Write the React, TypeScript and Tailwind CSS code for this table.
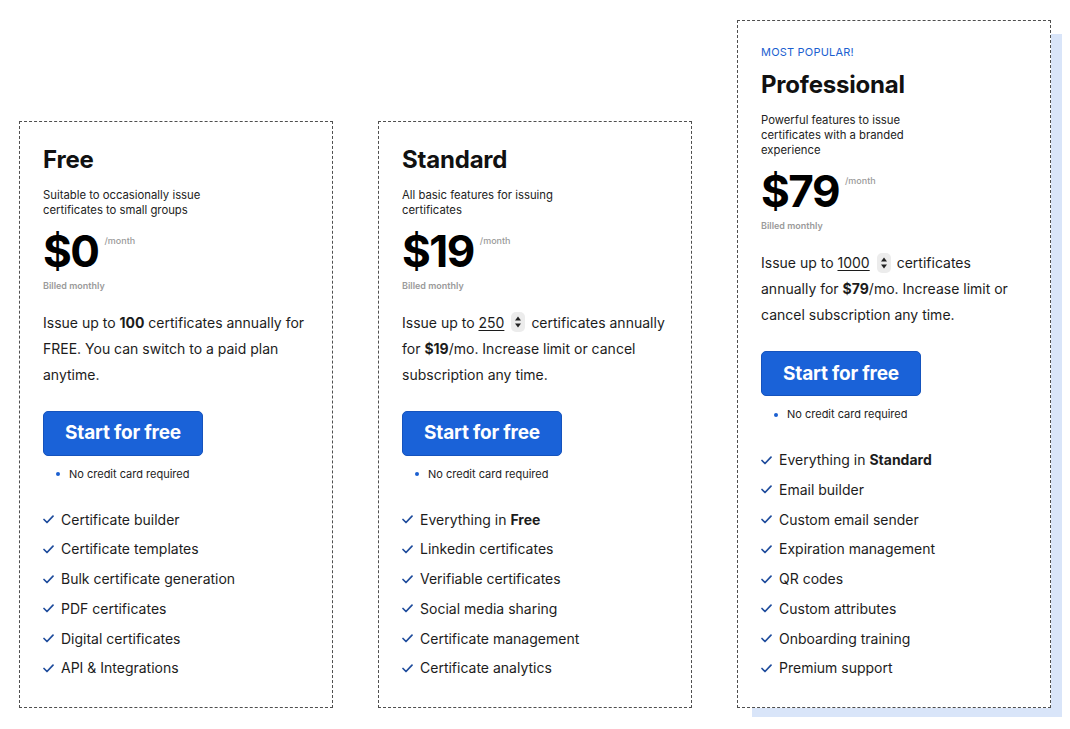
import React from 'react';

type Plan = {
  name: string;
  popular?: boolean;
  desc: string;
  price: string;
  body: React.ReactNode;
  features: React.ReactNode[];
};

function Stepper() {
  return (
    <span className="inline-flex items-center justify-center align-middle w-[14px] h-[20px] ml-[7px] mr-[6px] rounded-[5px] bg-[#ececec] -mt-[3px]">
      <svg width="8" height="14" viewBox="0 0 8 14">
        <path d="M4 1.5 L7 5.5 H1 Z" fill="#222" />
        <path d="M4 12.5 L7 8.5 H1 Z" fill="#222" />
      </svg>
    </span>
  );
}

function Check() {
  return (
    <svg width="11" height="9" viewBox="0 0 11 9" className="shrink-0">
      <path d="M1 4.5 L4 7.5 L10 1.2" fill="none" stroke="#1f4c9c" strokeWidth="1.7" strokeLinecap="round" strokeLinejoin="round" />
    </svg>
  );
}

const plans: Plan[] = [
  {
    name: 'Free',
    desc: 'Suitable to occasionally issue certificates to small groups',
    price: '$0',
    body: (
      <>
        Issue up to <b className="font-bold">100</b> certificates annually for FREE. You can switch to a paid plan anytime.
      </>
    ),
    features: [
      'Certificate builder',
      'Certificate templates',
      'Bulk certificate generation',
      'PDF certificates',
      'Digital certificates',
      'API & Integrations',
    ],
  },
  {
    name: 'Standard',
    desc: 'All basic features for issuing certificates',
    price: '$19',
    body: (
      <>
        Issue up to <span className="underline underline-offset-2">250</span>
        <Stepper />certificates annually for <b className="font-bold">$19</b>/mo. Increase limit or cancel subscription any time.
      </>
    ),
    features: [
      <>Everything in <b className="font-bold">Free</b></>,
      'Linkedin certificates',
      'Verifiable certificates',
      'Social media sharing',
      'Certificate management',
      'Certificate analytics',
    ],
  },
  {
    name: 'Professional',
    popular: true,
    desc: 'Powerful features to issue certificates with a branded experience',
    price: '$79',
    body: (
      <>
        Issue up to <span className="underline underline-offset-2">1000</span>
        <Stepper />certificates annually for <b className="font-bold">$79</b>/mo. Increase limit or cancel subscription any time.
      </>
    ),
    features: [
      <>Everything in <b className="font-bold">Standard</b></>,
      'Email builder',
      'Custom email sender',
      'Expiration management',
      'QR codes',
      'Custom attributes',
      'Onboarding training',
      'Premium support',
    ],
  },
];

function PlanCard({ plan }: { plan: Plan }) {
  return (
    <div className="relative w-[314px] shrink-0">
      {plan.popular && (
        <div className="absolute top-[14px] left-[15px] -right-[11px] -bottom-[9px] bg-[#d9e5f9]" />
      )}
      <div className="relative bg-white border border-dashed border-[#4f4f4f] pl-[23px] pr-6 pt-6 pb-[24px]">
        {plan.popular && (
          <div className="text-[11px] leading-[15px] text-[#1b5fd0] mb-[11px] tracking-[0.2px]">MOST POPULAR!</div>
        )}
        <h3 className="text-[24px] leading-[28px] font-bold text-[#111] tracking-[-0.2px]">{plan.name}</h3>
        <p className="mt-[14px] w-[176px] text-[11.3px] leading-[15px] text-[#222]">{plan.desc}</p>
        <div className="mt-[11px] flex items-start">
          <span className="text-[44px] leading-[44px] font-bold text-black tracking-[-1.5px]">{plan.price}</span>
          <span className="ml-[6px] mt-[6px] text-[9px] leading-[12px] text-[#9a9a9a] font-medium">/month</span>
        </div>
        <div className="mt-[7px] text-[9px] leading-[12px] text-[#9a9a9a] font-semibold">Billed monthly</div>
        <p className="mt-[18px] text-[14px] leading-[26px] text-[#1c1c1c]">{plan.body}</p>
        <button className="mt-[23px] w-[160px] h-[45px] rounded-[5px] bg-[#1a62d8] border border-[#1553bd] text-white text-[19px] font-bold tracking-[-0.2px]">
          Start for free
        </button>
        <div className="mt-[11px] flex items-center text-[11px] leading-[15px] text-[#222]">
          <span className="w-[4px] h-[4px] rounded-full bg-[#1b5fd0] ml-[13px] mr-[9px]" />
          No credit card required
        </div>
        <ul className="mt-[23px]">
          {plan.features.map((f, i) => (
            <li key={i} className="flex items-center gap-[7px] text-[14px] leading-[29.7px] text-[#1c1c1c]">
              <Check />
              <span>{f}</span>
            </li>
          ))}
        </ul>
      </div>
    </div>
  );
}

export default function App() {
  return (
    <div
      className="w-[1070px] h-[729px] bg-white flex items-end gap-[45px] pl-[19px] pb-[21px] overflow-hidden"
      style={{ fontFamily: 'Inter, "Noto Sans", sans-serif' }}
    >
      {plans.map((p) => (
        <PlanCard key={p.name} plan={p} />
      ))}
    </div>
  );
}
